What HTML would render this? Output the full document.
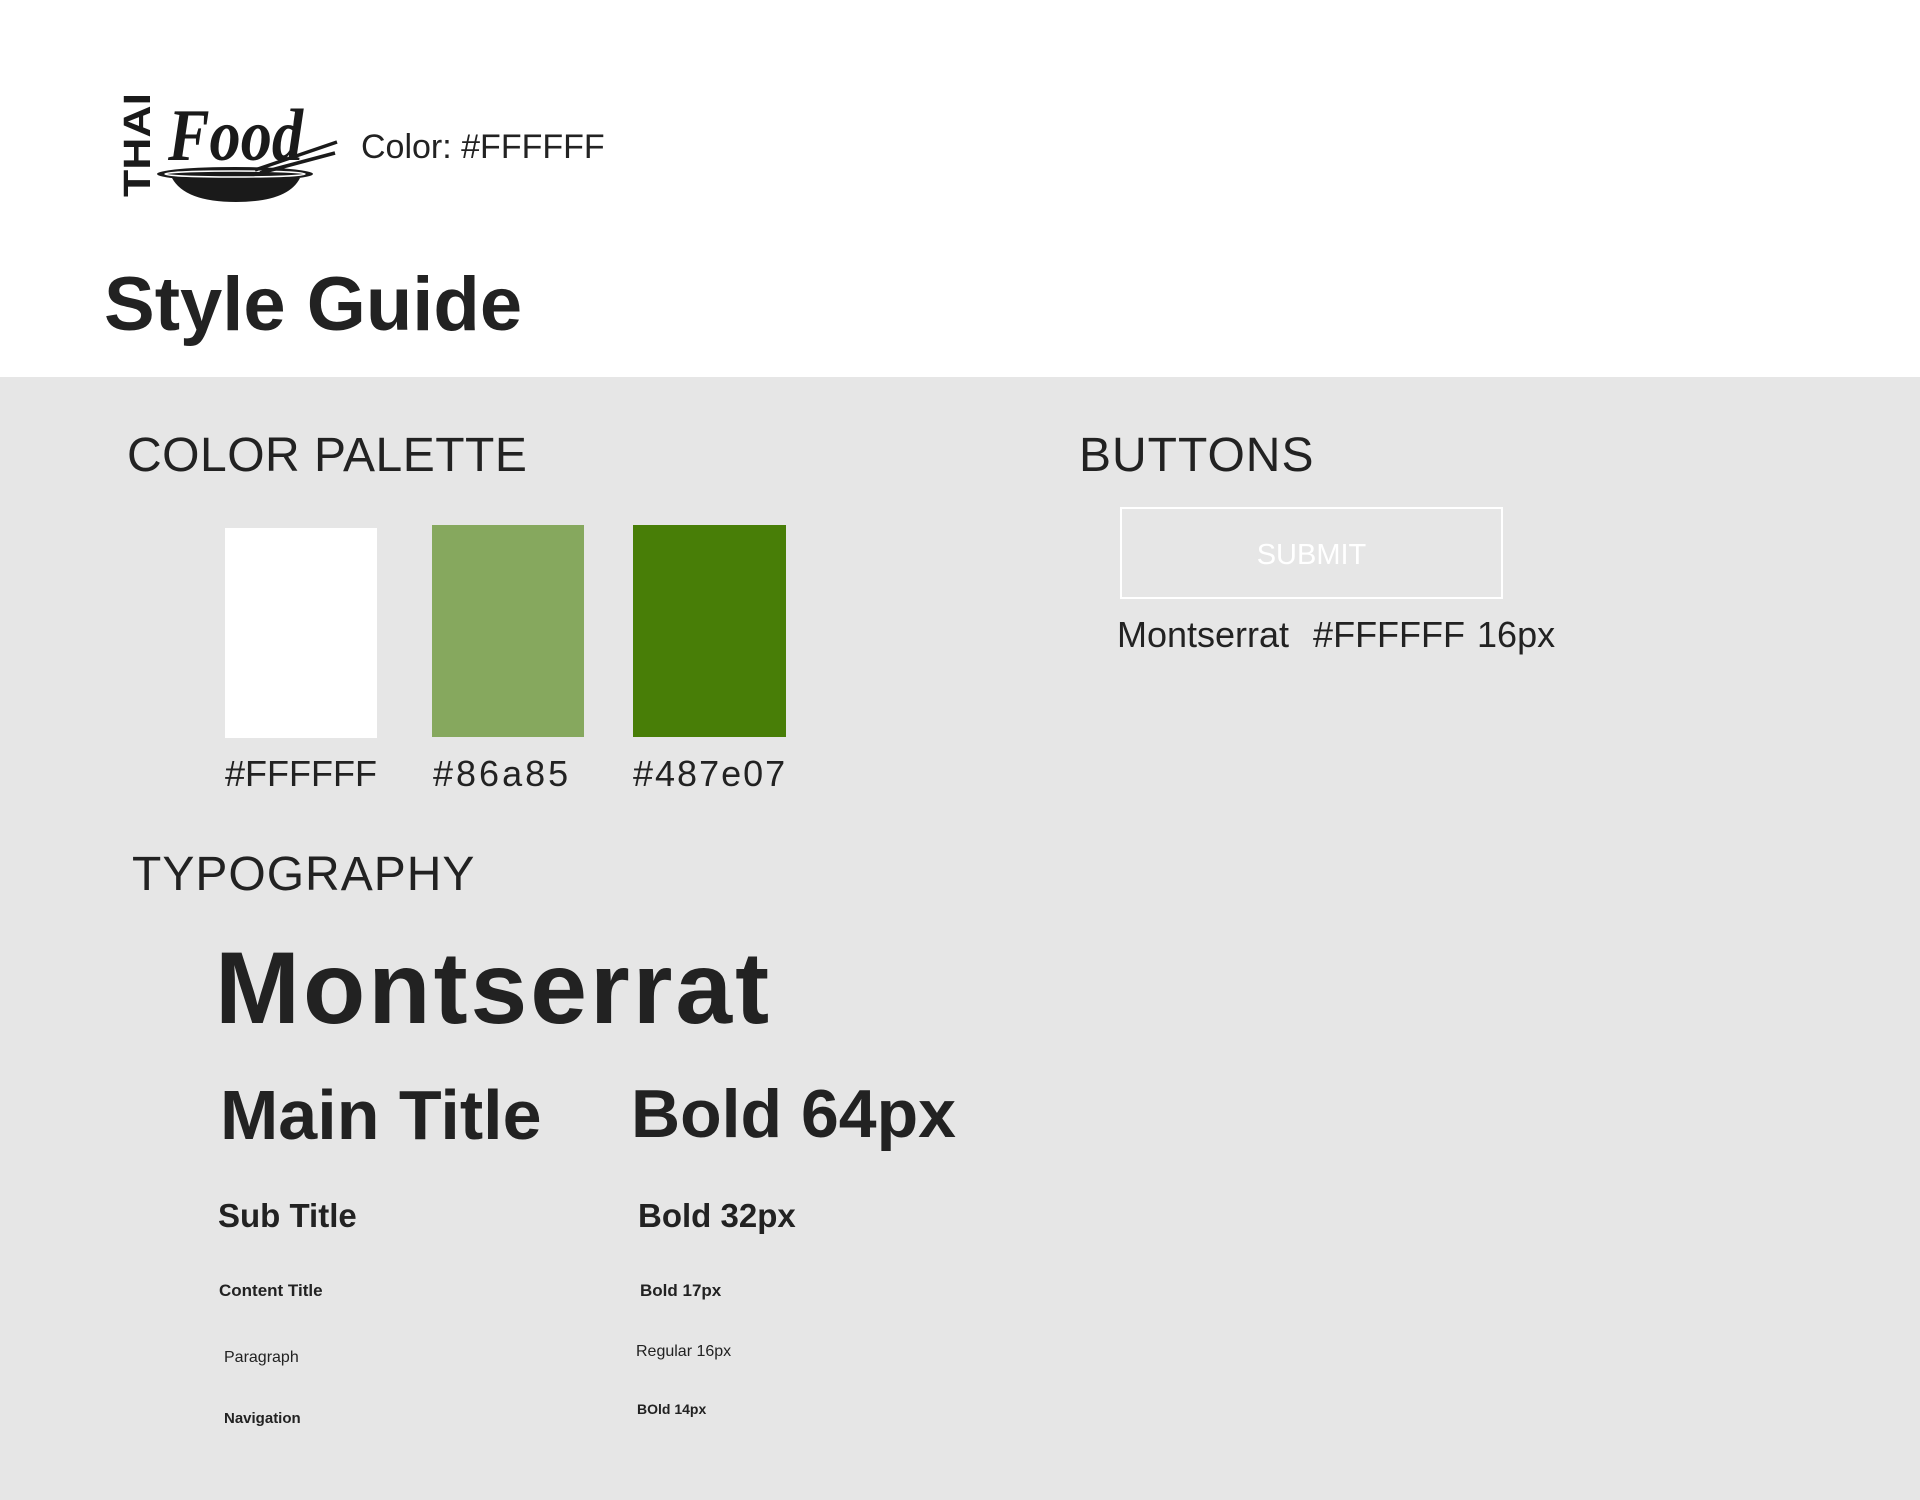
<!DOCTYPE html>
<html><head><meta charset="utf-8"><style>
body{margin:0;width:1920px;height:1500px;position:relative;background:#e6e6e6;font-family:"Liberation Sans",sans-serif;color:#222;overflow:hidden}
.hdr{position:absolute;left:0;top:0;width:1920px;height:377px;background:#fff}
.t{position:absolute;line-height:1;white-space:nowrap}
.sw{position:absolute}
</style></head><body>
<div class="hdr"></div>
<svg style="position:absolute;left:0;top:0" width="400" height="220">
<text transform="translate(150,197) rotate(-90)" font-family="Liberation Sans" font-weight="bold" font-size="38" textLength="104" lengthAdjust="spacingAndGlyphs" fill="#1a1a1a">THAI</text>
<text x="168" y="160" font-family="Liberation Serif" font-style="italic" font-weight="bold" font-size="74" textLength="135" lengthAdjust="spacingAndGlyphs" fill="#1a1a1a">Food</text>
<ellipse cx="235" cy="174" rx="78" ry="7" fill="#1a1a1a"/>
<ellipse cx="235" cy="174" rx="70" ry="3" fill="none" stroke="#fff" stroke-width="1.5"/>
<path d="M172 178 Q185 202 236 202 Q288 202 300 178Z" fill="#1a1a1a"/>
<path d="M255 170 L337 142 M260 173 L335 153" stroke="#1a1a1a" stroke-width="3.5"/>
</svg>
<div class="t" style="left:361px;top:130px;font-size:34px;color:#222">Color: #FFFFFF</div>
<div class="t" style="left:104px;top:267px;font-size:76px;font-weight:bold;color:#222">Style Guide</div>

<div class="t" style="left:127px;top:432px;font-size:48px;color:#222;letter-spacing:0.5px">COLOR PALETTE</div>
<div class="sw" style="left:225px;top:528px;width:152px;height:210px;background:#fff"></div>
<div class="sw" style="left:432px;top:525px;width:152px;height:212px;background:#86a85e"></div>
<div class="sw" style="left:633px;top:525px;width:153px;height:212px;background:#487e07"></div>
<div class="t" style="left:225px;top:756px;font-size:36px">#FFFFFF</div>
<div class="t" style="left:433px;top:756px;font-size:36px;letter-spacing:3px">#86a85</div>
<div class="t" style="left:633px;top:756px;font-size:36px;letter-spacing:2px">#487e07</div>

<div class="t" style="left:1079px;top:432px;font-size:48px;letter-spacing:1px">BUTTONS</div>
<div style="position:absolute;left:1120px;top:507px;width:379px;height:88px;border:2px solid #fff;color:#fff;font-size:29px;line-height:92px;text-align:center">SUBMIT</div>
<div class="t" style="left:1117px;top:617px;font-size:36px;word-spacing:2px">Montserrat&nbsp; #FFFFFF 16px</div>

<div class="t" style="left:132px;top:851px;font-size:48px;letter-spacing:1px">TYPOGRAPHY</div>
<div class="t" style="left:215px;top:937px;font-size:102px;font-weight:bold;letter-spacing:3px">Montserrat</div>
<div class="t" style="left:220px;top:1080px;font-size:70px;font-weight:bold">Main Title</div>
<div class="t" style="left:631px;top:1080px;font-size:68px;font-weight:bold">Bold 64px</div>
<div class="t" style="left:218px;top:1199px;font-size:33px;font-weight:bold">Sub Title</div>
<div class="t" style="left:638px;top:1199px;font-size:33px;font-weight:bold">Bold 32px</div>
<div class="t" style="left:219px;top:1282px;font-size:17px;font-weight:bold">Content Title</div>
<div class="t" style="left:640px;top:1282px;font-size:17px;font-weight:bold">Bold 17px</div>
<div class="t" style="left:224px;top:1350px;font-size:16px">Paragraph</div>
<div class="t" style="left:636px;top:1344px;font-size:16px">Regular 16px</div>
<div class="t" style="left:224px;top:1411px;font-size:15px;font-weight:bold">Navigation</div>
<div class="t" style="left:637px;top:1402px;font-size:14px;font-weight:bold">BOld 14px</div>
</body></html>
